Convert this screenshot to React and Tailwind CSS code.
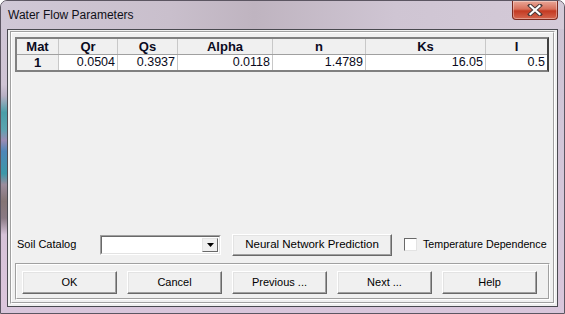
import React from 'react';

const cols = [
    { label: 'Mat', w: 'w-[44px]' },
    { label: 'Qr', w: 'w-[59px]' },
    { label: 'Qs', w: 'w-[60px]' },
    { label: 'Alpha', w: 'w-[95px]' },
    { label: 'n', w: 'w-[93px]' },
    { label: 'Ks', w: 'w-[120px]' },
    { label: 'I', w: 'w-[61px]' },
];

const values = ['0.0504', '0.3937', '0.0118', '1.4789', '16.05', '0.5'];

function Button({ children, className = '' }) {
    return (
        <div className={`shrink-0 flex items-center justify-center bg-[#f0f0f0] border border-t-white border-l-white border-r-[#696969] border-b-[#696969] shadow-[inset_-1px_-1px_0_#a0a0a0,inset_1px_1px_0_#e3e3e3] text-[11px] text-black whitespace-nowrap ${className}`}>
            {children}
        </div>
    );
}

function CloseButton() {
    return (
        <div className="w-[46px] h-[19px] mr-[6px] rounded-b-[4px] border border-t-0 border-[#7b2a1f] bg-[linear-gradient(to_bottom,#e9a797_0%,#d8705b_45%,#c33a22_55%,#d5664f_100%)] flex items-center justify-center shadow-[inset_0_0_0_1px_rgba(255,255,255,0.35)]">
            <svg width="16" height="12" viewBox="0 0 16 12">
                <path d="M3 1.5 L13 10.5 M13 1.5 L3 10.5" stroke="#4a3a3a" strokeWidth="4" strokeLinecap="square" />
                <path d="M3.5 2 L12.5 10 M12.5 2 L3.5 10" stroke="#ffffff" strokeWidth="2.2" strokeLinecap="square" />
            </svg>
        </div>
    );
}

export default function App() {
    return (
        <div className="w-[565px] h-[314px] bg-white font-['Liberation_Sans',Arial,sans-serif]">
            <div className="w-full h-full flex flex-col rounded-t-[7px] border border-[#5c5662] bg-[linear-gradient(to_bottom,#cbc3d2_0%,#d2c6d8_40%,#d9c6db_100%)] overflow-hidden">

                {/* title bar */}
                <div className="h-[28px] flex items-start bg-[linear-gradient(to_right,#d0c8d6_0%,#c9bfcc_30%,#bfb4c0_45%,#cfc5d3_70%,#d4cad8_100%)]">
                    <span className="ml-[7px] mt-[7px] text-[12px] leading-[15px] text-[#101018]">Water Flow Parameters</span>
                    <div className="flex-1" />
                    <CloseButton />
                </div>

                <div className="flex flex-1">
                    <div className="w-[6px] bg-[linear-gradient(to_bottom,#d0c6d6_0%,#cfc4d4_20%,#b8b0c4_24%,#4a9ea8_30%,#5aa4b0_36%,#9a8cb4_40%,#4e86b8_44%,#3c98a8_52%,#9c8c9c_56%,#847474_62%,#8a7a84_68%,#d6c2d8_74%,#dcc6dc_100%)]" />

                    {/* client area */}
                    <div className="flex-1 border border-[#4a4a50] bg-[#f0f0f0] pt-[1px] pl-[2px] pr-[2px] pb-[2px] flex">
                        <div className="flex-1 flex border border-t-[#a0a0a0] border-l-[#a0a0a0] border-r-white border-b-white">
                            <div className="flex-1 flex flex-col border border-t-white border-l-white border-r-[#a0a0a0] border-b-[#a0a0a0] pt-[4px] px-[3px] pb-[2px]">

                                {/* table */}
                                <div className="self-start border-2 border-t-[#808080] border-l-[#808080] border-r-[#404040] border-b-[#808080] bg-[#f0f0f0]">
                                    <div className="flex border-b border-[#a0a0a0]">
                                        {cols.map((c, i) => (
                                            <div key={c.label} className={`${i === 0 ? 'w-[42px]' : c.w} ${i === cols.length - 1 ? 'w-[59px]' : 'border-r border-[#c8c8c8]'} h-[15px] flex items-center justify-center text-[13px] font-bold text-[#0a0a20] leading-none`}>
                                                {c.label}
                                            </div>
                                        ))}
                                    </div>
                                    <div className="flex">
                                        <div className="w-[42px] h-[15px] border-r border-[#c8c8c8] flex items-center justify-center text-[13px] font-bold text-[#0a0a20] leading-none">1</div>
                                        {values.map((v, i) => (
                                            <div key={i} className={`${cols[i + 1].w} ${i === values.length - 1 ? 'w-[59px]' : 'border-r border-[#c8c8c8]'} h-[15px] bg-white flex items-center justify-end pr-[2px] text-[12.5px] text-[#0a0a20] leading-none`}>
                                                {v}
                                            </div>
                                        ))}
                                    </div>
                                </div>

                                <div className="flex-1" />

                                {/* soil catalog row */}
                                <div className="flex items-center h-[23px] pl-[2px]">
                                    <span className="w-[83px] shrink-0 text-[11px] text-black whitespace-nowrap">Soil Catalog</span>
                                    <div className="shrink-0 w-[121px] h-[20px] flex border border-t-[#a0a0a0] border-l-[#a0a0a0] border-r-white border-b-white">
                                        <div className="flex-1 flex bg-white border border-t-[#696969] border-l-[#696969] border-r-[#e3e3e3] border-b-[#e3e3e3] p-[1px]">
                                            <div className="flex-1" />
                                            <div className="w-[16px] bg-[#f0f0f0] border border-t-[#e3e3e3] border-l-[#e3e3e3] border-r-[#696969] border-b-[#696969] flex items-center justify-center">
                                                <svg width="7" height="4" viewBox="0 0 7 4"><path d="M0 0 H7 L3.5 4 Z" fill="#000" /></svg>
                                            </div>
                                        </div>
                                    </div>
                                    <Button className="ml-[11px] w-[160px] h-[22px] !text-[11.5px] border-r-[#202020] border-b-[#202020]">Neural Network Prediction</Button>
                                    <div className="shrink-0 ml-[12px] w-[13px] h-[13px] bg-white border border-t-[#696969] border-l-[#696969] border-r-[#e3e3e3] border-b-[#e3e3e3]" />
                                    <span className="shrink-0 ml-[6px] text-[10.7px] text-black whitespace-nowrap">Temperature Dependence</span>
                                </div>

                                {/* button group */}
                                <div className="mt-[7px] border border-t-[#a0a0a0] border-l-[#a0a0a0] border-r-white border-b-white">
                                    <div className="border border-t-white border-l-white border-r-[#a0a0a0] border-b-[#a0a0a0] flex gap-[10px] px-[5px] pt-[6px] pb-[4px]">
                                        <Button className="w-[95px] h-[23px]">OK</Button>
                                        <Button className="w-[95px] h-[23px]">Cancel</Button>
                                        <Button className="w-[95px] h-[23px]">Previous ...</Button>
                                        <Button className="w-[95px] h-[23px]">Next ...</Button>
                                        <Button className="w-[95px] h-[23px]">Help</Button>
                                    </div>
                                </div>
                            </div>
                        </div>
                    </div>

                    <div className="w-[6px]" />
                </div>
                <div className="h-[6px]" />
            </div>
        </div>
    );
}
